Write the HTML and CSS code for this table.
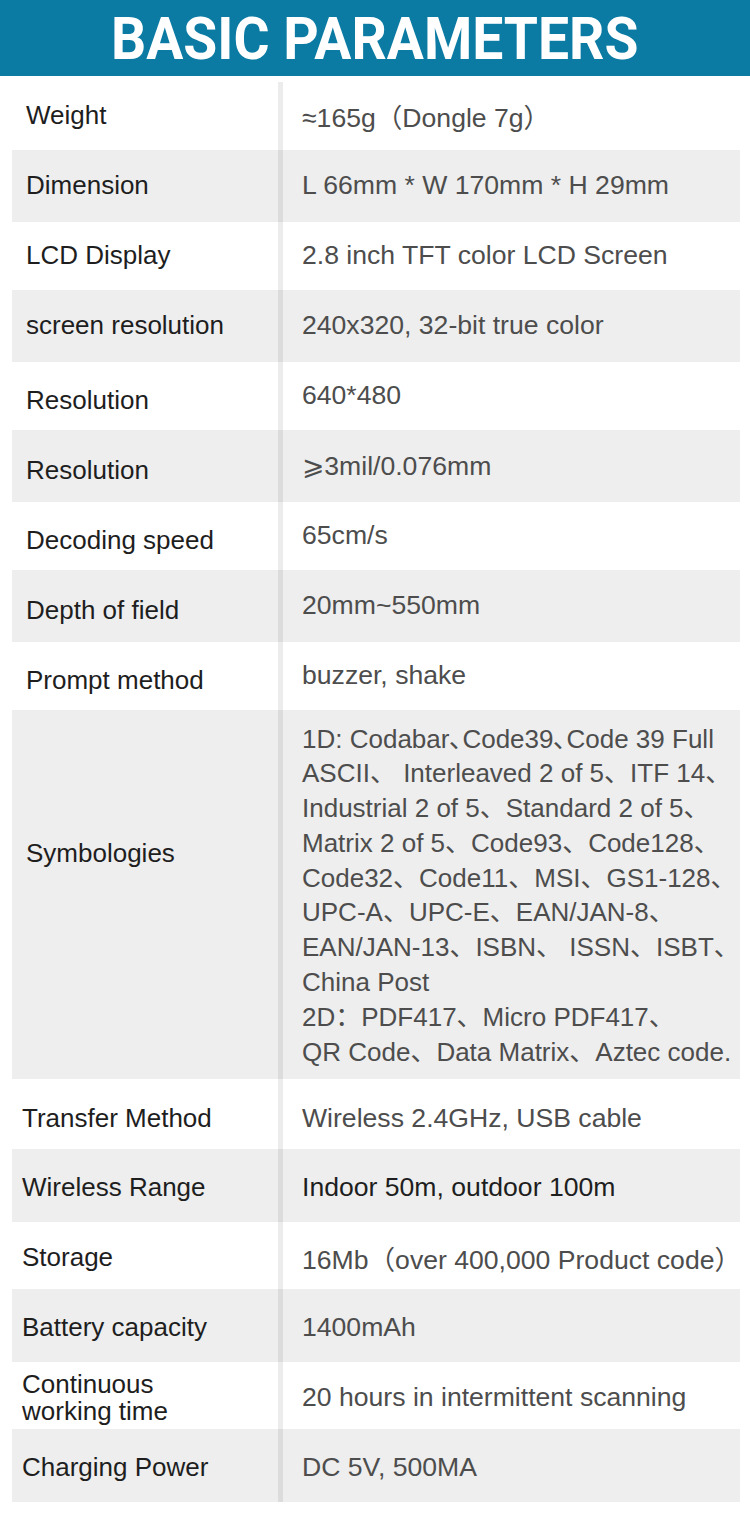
FILE: index.html
```html
<!DOCTYPE html>
<html lang="en">
<head>
<meta charset="utf-8">
<title>Basic Parameters</title>
<link rel="stylesheet" href="styles.css">
</head>
<body>
<header class="banner">
  <h1 class="title"><span class="title-text">BASIC PARAMETERS</span></h1>
</header>
<main class="specs">
  <div class="row"><div class="key">Weight</div><div class="val">≈165g（Dongle 7g）</div></div>
  <div class="row alt"><div class="key">Dimension</div><div class="val">L 66mm * W 170mm * H 29mm</div></div>
  <div class="row"><div class="key">LCD Display</div><div class="val">2.8 inch TFT color LCD Screen</div></div>
  <div class="row alt"><div class="key">screen resolution</div><div class="val">240x320, 32-bit true color</div></div>
  <div class="row"><div class="key shift">Resolution</div><div class="val">640*480</div></div>
  <div class="row alt"><div class="key shift">Resolution</div><div class="val">⩾3mil/0.076mm</div></div>
  <div class="row"><div class="key shift">Decoding speed</div><div class="val">65cm/s</div></div>
  <div class="row alt"><div class="key shift">Depth of field</div><div class="val">20mm~550mm</div></div>
  <div class="row"><div class="key shift">Prompt method</div><div class="val">buzzer, shake</div></div>
  <div class="row alt tall"><div class="key raise">Symbologies</div><div class="val block">1D: Codabar､Code39､Code 39 Full<br>ASCII、 Interleaved 2 of 5、ITF 14、<br>Industrial 2 of 5、Standard 2 of 5、<br>Matrix 2 of 5、Code93、Code128、<br>Code32、Code11、MSI、GS1-128、<br>UPC-A、UPC-E、EAN/JAN-8、<br>EAN/JAN-13、ISBN、 ISSN、ISBT、<br>China Post<br>2D：PDF417、Micro PDF417、<br>QR Code、Data Matrix、Aztec code.</div></div>
  <div class="row late first-late"><div class="key inset">Transfer Method</div><div class="val">Wireless 2.4GHz, USB cable</div></div>
  <div class="row late alt"><div class="key inset">Wireless Range</div><div class="val dark">Indoor 50m, outdoor 100m</div></div>
  <div class="row late"><div class="key inset">Storage</div><div class="val">16Mb（over 400,000 Product code）</div></div>
  <div class="row late alt"><div class="key inset">Battery capacity</div><div class="val">1400mAh</div></div>
  <div class="row late"><div class="key inset two">Continuous<br>working time</div><div class="val">20 hours in intermittent scanning</div></div>
  <div class="row late alt"><div class="key inset">Charging Power</div><div class="val">DC 5V, 500MA</div></div>
</main>
</body>
</html>
```
FILE: styles.css
```css
html, body {
  margin: 0;
  padding: 0;
  background: #ffffff;
}

body {
  width: 750px;
  font-family: "Liberation Sans", Arial, "Noto Sans CJK SC", "DejaVu Sans", sans-serif;
}

.banner {
  height: 76px;
  background: #0b7ba3;
  display: flex;
  align-items: center;
  justify-content: center;
  overflow: hidden;
}

.title {
  margin: 0;
  font-family: Roboto, "Liberation Sans", sans-serif;
  font-weight: 700;
  font-size: 60px;
  line-height: 76px;
  color: #ffffff;
}

.title-text {
  display: inline-block;
  transform: scaleX(0.92);
  transform-origin: center;
  padding-top: 2px;
}

.specs {
  margin: 6px 10px 16px 12px;
}

.row {
  display: grid;
  grid-template-columns: 271px 1fr;
  min-height: 67.5px;
}

.row.alt {
  background: #eeeeee;
  min-height: 72.5px;
}

.row.first-late {
  min-height: 70px;
}

.key {
  box-sizing: border-box;
  display: flex;
  align-items: center;
  padding-left: 14px;
  border-right: 5px solid rgba(0, 0, 0, 0.075);
  font-size: 26px;
  color: #1e1e1e;
  white-space: nowrap;
}

.key.inset {
  padding-left: 10px;
}

.row.late > .key,
.row.late > .val {
  padding-top: 4px;
}

.row.first-late > .key,
.row.first-late > .val {
  padding-top: 8px;
}

.key.shift {
  padding-top: 9px;
}

.key.raise {
  padding-bottom: 82px;
}

.key.two {
  line-height: 27px;
}

.val {
  display: flex;
  align-items: center;
  padding-left: 19px;
  font-size: 26.6px;
  color: #4d4d4d;
  white-space: nowrap;
}

.val.dark {
  color: #1e1e1e;
}

.val.block {
  display: block;
  font-size: 26px;
  padding-top: 12px;
  padding-bottom: 10px;
  line-height: 34.8px;
}
```
